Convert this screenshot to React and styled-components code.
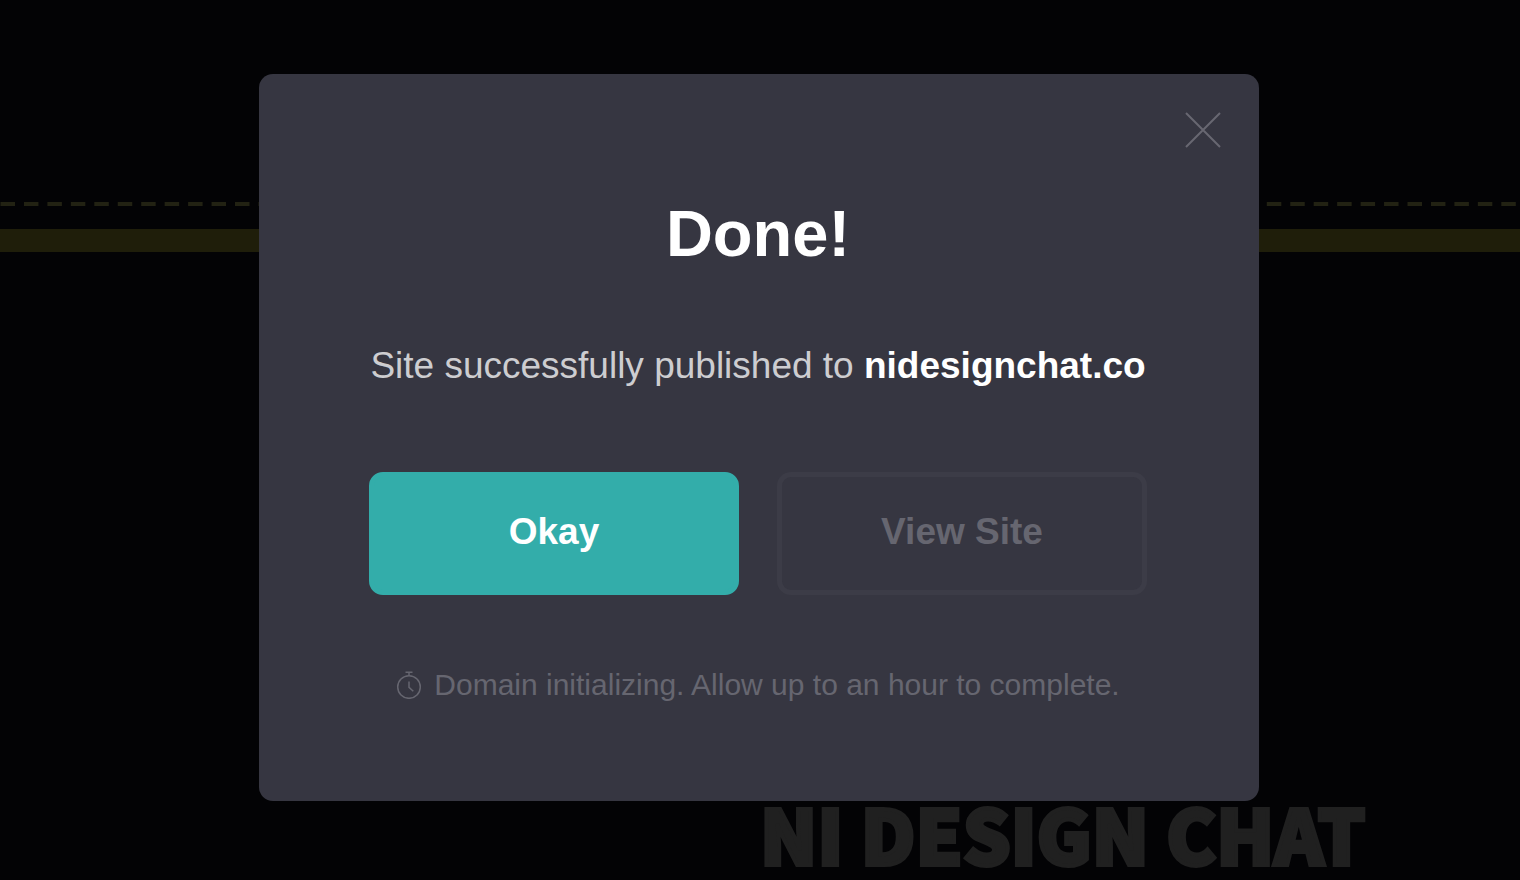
import styled, { createGlobalStyle } from "styled-components";

const GlobalStyle = createGlobalStyle`
    body{
        margin:0;
        background:#030305;
        font-family:"Liberation Sans", Arial, sans-serif;
    }
    *{
        box-sizing:border-box;
    }
`

const Page = styled.div`
    position:relative;
    height:100vh;
    overflow:hidden;
`
const Site = styled.div`
    display:flex;
    flex-direction:column;
    gap:23px;
    padding-top:202px;
`
const Dashes = styled.svg`
    display:block;
    width:100%;
    height:4px;
`
const Stripe = styled.div`
    height:23px;
    background:#1f1e0a;
`
const SiteName = styled.h2`
    margin:0;
    padding:520px 0 0 50%;
    font-family:"Noto Sans CJK JP", "Noto Sans", sans-serif;
    font-size:75px;
    font-weight:900;
    line-height:75px;
    -webkit-text-stroke:4px #202020;
    white-space:nowrap;
    color:#202020;
`
const Overlay = styled.div`
    position:absolute;
    inset:0;
    display:flex;
    justify-content:center;
    align-items:flex-start;
    padding:74px 26px 74px 24px;
`
const Dialog = styled.section`
    position:relative;
    width:100%;
    max-width:1000px;
    padding:120px 112px 96px 110px;
    border-radius:14px;
    background:#363641;
    text-align:center;
`
const CloseButton = styled.button`
    position:absolute;
    top:36px;
    right:36px;
    display:flex;
    padding:0;
    border:none;
    background:none;
    color:#686771;
    cursor:pointer;
`
const Title = styled.h1`
    margin:0;
    font-size:65px;
    line-height:80px;
    color:#fff;
`
const Message = styled.p`
    margin:68px 0 0;
    font-size:37px;
    line-height:48px;
    white-space:nowrap;
    color:#cdcdd0;

    strong{
        color:#fff;
    }
`
const Actions = styled.div`
    display:flex;
    gap:38px;
    margin-top:82px;
`
const ActionButton = styled.button`
    flex:1;
    height:123px;
    padding:0 0 4px;
    border:5px solid ${({ $primary }) => $primary ? "#33adaa" : "#3c3c47"};
    border-radius:14px;
    background:${({ $primary }) => $primary ? "#33adaa" : "transparent"};
    color:${({ $primary }) => $primary ? "#fff" : "#666670"};
    font-family:inherit;
    font-size:37px;
    font-weight:bold;
    cursor:pointer;
`
const Note = styled.p`
    display:flex;
    justify-content:center;
    align-items:center;
    gap:12px;
    margin:70px 0 0;
    font-size:30px;
    line-height:40px;
    white-space:nowrap;
    color:#666670;
`

const CloseIcon = () => (
    <svg width="40" height="40" viewBox="0 0 40 40" fill="none" stroke="currentColor" strokeWidth="2">
        <path d="M3 3L37 37M37 3L3 37" />
    </svg>
)

const StopwatchIcon = () => (
    <svg width="26" height="28" viewBox="0 0 26 28" fill="none" stroke="currentColor" strokeWidth="1.5" aria-hidden="true">
        <circle cx="13" cy="16" r="11.3" />
        <path d="M9.5 1.3H16.5M13 1.3V4.7M13 10.5V16.3L17.3 20.3" />
    </svg>
)

const Backdrop = () => (
    <Site>
        <Dashes aria-hidden="true">
            <line x1="0.5" y1="2" x2="100%" y2="2" stroke="#222213" strokeWidth="4" strokeDasharray="14.5 8.95" />
        </Dashes>
        <Stripe />
        <SiteName>NI DESIGN CHAT</SiteName>
    </Site>
)

const App = () => {
    return <>
        <GlobalStyle />
        <Page>
            <Backdrop />
            <Overlay>
                <Dialog role="dialog" aria-labelledby="dialog-title">
                    <CloseButton type="button" aria-label="Close"><CloseIcon /></CloseButton>
                    <Title id="dialog-title">Done!</Title>
                    <Message>Site successfully published to <strong>nidesignchat.co</strong></Message>
                    <Actions>
                        <ActionButton type="button" $primary>Okay</ActionButton>
                        <ActionButton type="button">View Site</ActionButton>
                    </Actions>
                    <Note><StopwatchIcon />Domain initializing. Allow up to an hour to complete.</Note>
                </Dialog>
            </Overlay>
        </Page>
    </>
}

export default App
